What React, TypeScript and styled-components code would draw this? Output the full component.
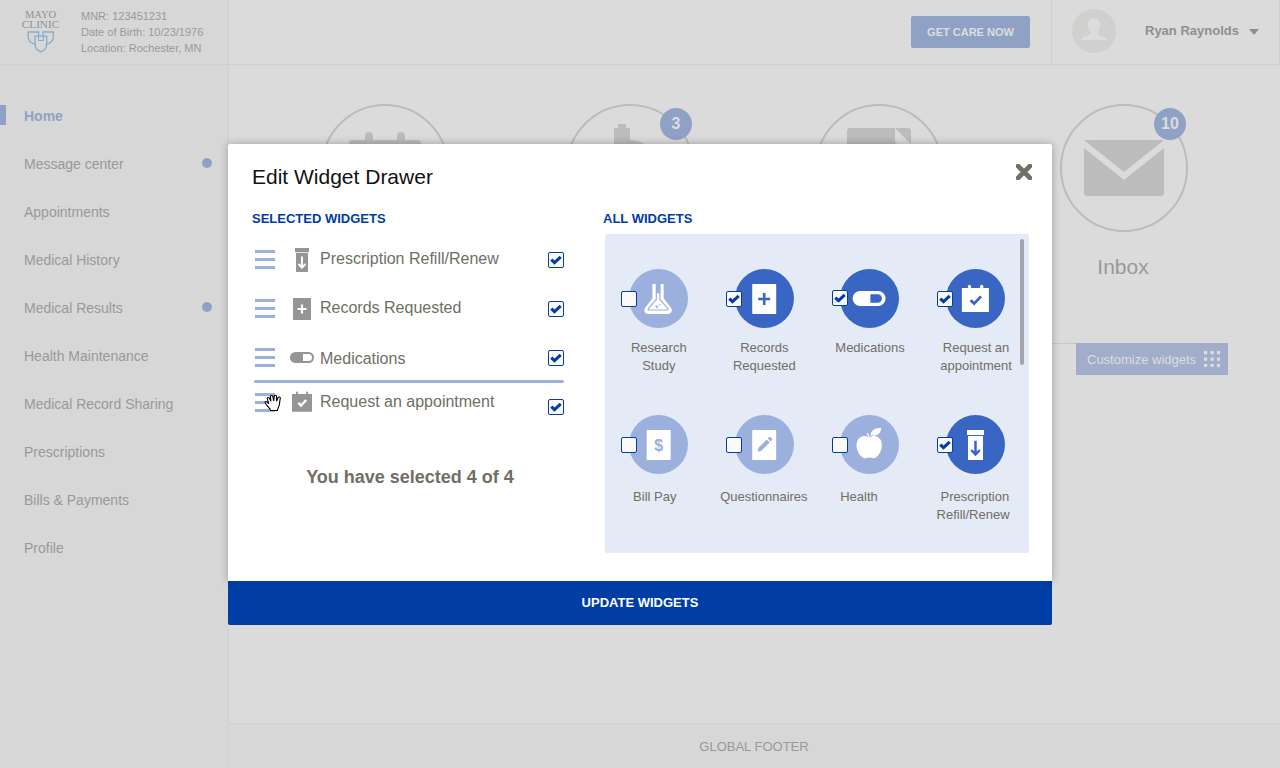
import React from "react";
import styled, { createGlobalStyle, css } from "styled-components";

const color = {
  main: "#dbdbdb",
  side: "#d7d7d7",
  line: "#d0d0d0",
  mutedText: "#999999",
  mutedBlue: "#8fa2c6",
  shape: "#bcbcbc",
  primary: "#003da5",
  strong: "#3a66c3",
  soft: "#9bb0dc",
  text: "#6f6f64",
  icon: "#959595",
  panel: "#e4eaf6",
};

const GlobalStyle = createGlobalStyle`
  *, *::before, *::after { box-sizing: border-box; }
  body {
    margin: 0;
    overflow: hidden;
    font-family: "Liberation Sans", Arial, sans-serif;
    background: ${color.main};
  }
  ul { list-style: none; margin: 0; padding: 0; }
  h1, h2, p { margin: 0; }
  button { font-family: inherit; border: 0; padding: 0; }
  svg { display: block; flex: none; }
`;

/* ---------- page frame ---------- */

const Page = styled.div`
  position: relative;
  display: grid;
  grid-template-columns: 228px 1fr;
  width: 1280px;
  height: 768px;
  overflow: hidden;
`;

const Sidebar = styled.aside`
  background: ${color.side};
  color: ${color.mutedText};
`;

const Identity = styled.div`
  display: flex;
  height: 65px;
  padding: 8px 0 0 21px;
  border-bottom: 1px solid ${color.line};
`;

const Logo = styled.div`
  display: flex;
  flex-direction: column;
  align-items: center;
  width: 39px;
  padding-top: 2px;
  margin-right: 21px;
  font-family: "Liberation Serif", "Times New Roman", serif;
  color: #929292;
`;

const LogoLine = styled.span<{ $size: number }>`
  font-size: ${(p) => p.$size}px;
  line-height: 9.5px;
  white-space: nowrap;
`;

const Patient = styled.p`
  font-size: 11px;
  line-height: 16px;
  white-space: nowrap;
`;

const Nav = styled.ul`
  padding-top: 27px;
`;

const NavItem = styled.li<{ $active?: boolean }>`
  display: flex;
  align-items: center;
  justify-content: space-between;
  height: 48px;
  padding: 0 16px 0 24px;
  font-size: 14px;
  ${(p) =>
    p.$active &&
    css`
      padding-left: 0;
      font-weight: bold;
      color: ${color.mutedBlue};
      justify-content: flex-start;
      gap: 18px;
      &::before {
        content: "";
        width: 6px;
        height: 20px;
        margin-top: -2px;
        background: ${color.mutedBlue};
      }
    `}
`;

const NavDot = styled.span`
  width: 10px;
  height: 10px;
  margin-top: -2px;
  border-radius: 50%;
  background: ${color.mutedBlue};
`;

const Main = styled.main`
  display: flex;
  flex-direction: column;
  background: ${color.main};
  border-left: 1px solid ${color.line};
`;

const TopBar = styled.header`
  display: flex;
  justify-content: flex-end;
  align-items: flex-start;
  height: 65px;
  border-bottom: 1px solid ${color.line};
`;

const CareButton = styled.button`
  width: 119px;
  height: 32px;
  margin: 16px 21px 0 0;
  border-radius: 2px;
  background: ${color.mutedBlue};
  color: #dddddd;
  font-size: 11px;
  font-weight: bold;
`;

const Account = styled.div`
  display: flex;
  width: 229px;
  height: 64px;
  padding: 9px 0 0 20px;
  border: solid ${color.line};
  border-width: 0 1px;
`;

const UserName = styled.span`
  margin: 14px 10px 0 29px;
  font-size: 13px;
  line-height: 15px;
  font-weight: bold;
  color: #8f8f8f;
  white-space: nowrap;
`;

const Caret = styled.svg`
  margin-top: 20px;
`;

const Tiles = styled.div`
  display: grid;
  grid-template-columns: 245px 249px 245px 128px;
  height: 278px;
  padding: 39px 0 0 92px;
`;

const Tile = styled.div`
  display: flex;
  flex-direction: column;
  align-items: center;
  width: 128px;
`;

const Ring = styled.div`
  position: relative;
  width: 128px;
  height: 128px;
  border: 2px solid ${color.shape};
  border-radius: 50%;
`;

const Badge = styled.span`
  position: absolute;
  top: 2px;
  right: 0;
  width: 32px;
  height: 32px;
  border-radius: 50%;
  background: ${color.mutedBlue};
  color: #dcdcdc;
  font-size: 16px;
  font-weight: bold;
  line-height: 32px;
  text-align: center;
`;

const TileLabel = styled.span`
  margin: 22px 2px 0 0;
  font-size: 21px;
  line-height: 26px;
  color: ${color.mutedText};
`;

const CustomizeRow = styled.div`
  display: flex;
  justify-content: flex-end;
  padding-right: 52px;
  &::before {
    content: "";
    flex: 1;
    height: 1px;
    background: #c6c6c6;
  }
`;

const CustomizeButton = styled.button`
  display: flex;
  align-items: center;
  gap: 8px;
  width: 152px;
  height: 32px;
  padding-left: 11px;
  background: #a1adc9;
  color: #dddddd;
  font-size: 13px;
  white-space: nowrap;
`;

const Footer = styled.footer`
  height: 45px;
  margin-top: auto;
  padding-right: 1px;
  border-top: 1px solid ${color.line};
  background: ${color.side};
  color: ${color.mutedText};
  font-size: 13px;
  line-height: 45px;
  text-align: center;
`;

/* ---------- dialog ---------- */

const Dialog = styled.section`
  position: absolute;
  top: 144px;
  left: 228px;
  display: flex;
  flex-direction: column;
  width: 824px;
  height: 481px;
`;

const DialogBody = styled.div`
  display: grid;
  grid-template-columns: 351px 1fr;
  grid-template-rows: 67px 1fr;
  height: 437px;
  padding: 0 20px 0 24px;
  border-radius: 2px 2px 0 0;
  background: #ffffff;
  box-shadow: 0 0 8px rgba(0, 0, 0, 0.28);
`;

const DialogHeader = styled.div`
  grid-column: 1 / -1;
  display: flex;
  justify-content: space-between;
  align-items: flex-start;
  padding-top: 20px;
`;

const Title = styled.h1`
  font-size: 21px;
  line-height: 26px;
  font-weight: normal;
  color: #111111;
`;

const SectionTitle = styled.h2`
  font-size: 13px;
  line-height: 16px;
  font-weight: bold;
  color: ${color.primary};
`;

const SelectedList = styled.ul`
  width: 312px;
  padding-top: 8px;
`;

const SelectedRow = styled.li<{ $height: number }>`
  display: grid;
  grid-template-columns: 20px 24px 1fr 16px;
  column-gap: 6px;
  align-items: start;
  height: ${(p) => p.$height}px;
  padding-left: 3px;
`;

const Handle = styled.span<{ $top: number }>`
  position: relative;
  display: flex;
  flex-direction: column;
  gap: 5px;
  width: 20px;
  margin-top: ${(p) => p.$top}px;
`;

const HandleBar = styled.span`
  height: 3px;
  background: ${color.soft};
`;

const RowIcon = styled.span<{ $top: number }>`
  width: 24px;
  margin: ${(p) => p.$top}px 0 0 9px;
`;

const RowLabel = styled.span<{ $top: number }>`
  margin: ${(p) => p.$top}px 0 0 9px;
  font-size: 16px;
  line-height: 18px;
  color: ${color.text};
  white-space: nowrap;
`;

const DropLine = styled.li`
  height: 3px;
  margin: 0 0 0 2px;
  border-radius: 2px;
  background: ${color.soft};
`;

const Cursor = styled.svg`
  position: absolute;
  top: 1px;
  left: 9px;
`;

const Check = styled.span<{ $top?: number }>`
  display: block;
  width: 16px;
  height: 16px;
  margin-top: ${(p) => p.$top ?? 0}px;
  border: 1px solid ${color.primary};
  border-radius: 2px;
  background: #fafafa;
`;

const Count = styled.p`
  width: 316px;
  margin-top: 37px;
  font-size: 18px;
  line-height: 22px;
  font-weight: bold;
  color: ${color.text};
  text-align: center;
`;

const WidgetPanel = styled.div`
  display: flex;
  align-items: flex-start;
  width: 424px;
  height: 319px;
  margin: 7px 0 0 2px;
  padding: 5px 0 0 1px;
  border-radius: 2px;
  background: ${color.panel};
`;

const WidgetGrid = styled.ul`
  flex: none;
  display: grid;
  grid-template-columns: repeat(4, 105.6px);
  grid-template-rows: 146px 146px;
  width: 414px;
  padding-top: 30px;
`;

const ScrollThumb = styled.div`
  width: 4px;
  height: 126px;
  border-radius: 2px;
  background: #a0a5ae;
`;

const Widget = styled.li`
  display: flex;
  flex-direction: column;
  align-items: center;
`;

const Disc = styled.div<{ $on?: boolean }>`
  position: relative;
  flex: none;
  width: 59px;
  height: 59px;
  border-radius: 50%;
  color: ${(p) => (p.$on ? color.strong : color.soft)};
  background: currentColor;
`;

const DiscCheck = styled.div<{ $top: number }>`
  position: absolute;
  top: ${(p) => p.$top}px;
  left: -8.7px;
`;

const WidgetLabel = styled.span<{ $shift?: number; $top: number }>`
  margin: ${(p) => p.$top}px 0 0 ${(p) => p.$shift ?? 0}px;
  font-size: 13px;
  line-height: 18px;
  color: ${color.text};
  text-align: center;
  white-space: pre;
`;

const UpdateButton = styled.button`
  height: 44px;
  padding-bottom: 2px;
  border-radius: 0 0 2px 2px;
  background: ${color.primary};
  color: #ffffff;
  font-size: 13px;
  font-weight: bold;
`;

/* ---------- drawings ---------- */

const ShieldMark = styled.svg`
  margin-top: 2px;
`;

const Shields = () => (
  <ShieldMark width="28" height="22" viewBox="0 0 28 22" fill="none" stroke="#86adc8" strokeWidth="1.3">
    <path d="M9 13.6C4 12.500 1.300 9.500 1.200 6V1h10.500v4.200" />
    <path d="M18.500 13.600C23.500 12.500 26.200 9.500 26.300 6V1H16v4.200" />
    <path d="M8 5.200h11.700v8c0 3.600-3 6.500-5.900 7.600C10.800 19.700 8 16.800 8 13.200z" />
    <path d="M11.500 5v4.500h4.700V5" strokeWidth="1" />
  </ShieldMark>
);

const Avatar = () => (
  <svg width="44" height="44" viewBox="0 0 44 44">
    <circle cx="22" cy="22" r="22" fill="#d0d0ce" />
    <path
      d="M22 9c-3.700 0-6.200 2.700-6.200 6.800 0 3 1.200 5.800 3 7.200v1.500c-.3 1.200-3 1.900-5.200 2.800C10.800 28.400 9.300 29 9 31h26c-.3-2-1.800-2.600-4.600-3.700-2.200-.9-4.900-1.600-5.200-2.800V23c1.800-1.400 3-4.200 3-7.200C28.200 11.700 25.700 9 22 9z"
      fill="#dcdcdc"
    />
  </svg>
);

const TileArt = ({ children }: { children: React.ReactNode }) => (
  <svg width="124" height="124" viewBox="2 2 124 124" fill={color.shape}>
    {children}
  </svg>
);

const Tick = () => (
  <svg width="14" height="14" viewBox="0 0 14 14">
    <path d="M2.300 6.600l3.200 3.100 6.200-5.900" fill="none" stroke={color.primary} strokeWidth="3" />
  </svg>
);

const CheckBox = ({ on, top }: { on?: boolean; top?: number }) => (
  <Check $top={top} role="checkbox" aria-checked={!!on}>
    {on && <Tick />}
  </Check>
);

const GrabHand = () => (
  <Cursor width="19" height="18" viewBox="0 0 17 18" preserveAspectRatio="none">
    <path
      d="M5.800 16.500C5.500 14.500 3.500 12.800 2.600 11.200 1.800 9.800.5 8.700 1 7.900c.7-.9 2 .1 3.200 1.700L2.900 4.700C2.600 3.400 4.300 2.900 4.800 4.100L6.200 7.300 5.700 2.600c-.1-1.500 1.900-1.600 2.200-.2L8.700 7l.5-4.800C9.400.8 11.300 1 11.300 2.400L11.200 7.200l1.400-3.600c.5-1.200 2.200-.7 2 .6-.5 2.600-.6 4.500-.9 6.600-.3 2.200-1.500 3.300-1.700 5.700z"
      fill="#fff"
      stroke="#000"
      strokeWidth="1"
    />
  </Cursor>
);

const SmallBottle = () => (
  <>
    <path d="M5 0h14v4.200H5zM6 5h12v19H6z" fill={color.icon} />
    <path d="M12 8.500v11M8.500 16l3.500 3.600 3.500-3.600" fill="none" stroke="#fff" strokeWidth="1.900" />
  </>
);

const SmallRecord = () => (
  <>
    <rect x="3" y="1" width="18" height="22" rx=".6" fill={color.icon} />
    <path d="M12 7.500v9M7.500 12h9" stroke="#fff" strokeWidth="2.200" />
  </>
);

const SmallPill = () => (
  <>
    <rect y="6" width="24" height="11" rx="5.500" fill={color.icon} />
    <path d="M13 8h5.500a3.500 3.500 0 010 7H13z" fill="#fff" />
  </>
);

const SmallCalendar = () => (
  <>
    <path d="M2 4h3.900V2.600a1 1 0 012 0V4h8.200V2.600a1 1 0 012 0V4H22v17.700H2z" fill={color.icon} />
    <path d="M8.300 12.800l2.700 2.800 5.300-5.600" fill="none" stroke="#fff" strokeWidth="2.300" />
  </>
);

const DiscArt = ({ children }: { children: React.ReactNode }) => (
  <svg width="59" height="59" viewBox="0 0 59 59" fill="#fff">
    {children}
  </svg>
);

const Flask = () => (
  <DiscArt>
    <path d="M23.400 15h11.300v14.300l7.200 9.400c2.300 3.200 0 6.300-3.200 6.300H19.500c-3.200 0-5.500-3.100-3.200-6.300l7.100-9.400z" />
    <path d="M26.700 15h4.900v9.300h-4.900z" fill="currentColor" />
    <path
      d="M27.300 24v6.500l-8 9.200c-.5.700 0 1.300.7 1.300h18.200c.7 0 1.200-.6.7-1.300l-8-9.200V24"
      fill="none"
      stroke="currentColor"
      strokeWidth="1.200"
    />
    <circle cx="27.800" cy="37.700" r="1.300" fill="currentColor" />
    <circle cx="30.700" cy="35.700" r=".8" fill="currentColor" />
  </DiscArt>
);

const RecordSheet = () => (
  <DiscArt>
    <rect x="17.200" y="15" width="24" height="30" rx=".8" />
    <path d="M29.200 24v12M23.200 30h12" stroke="currentColor" strokeWidth="2.600" />
  </DiscArt>
);

const Pill = () => (
  <DiscArt>
    <rect x="12.600" y="22" width="33" height="15" rx="7.500" />
    <path d="M30.400 25.300h7.300a4.200 4.200 0 010 8.400h-7.300z" fill="currentColor" />
  </DiscArt>
);

const Calendar = () => (
  <DiscArt>
    <path d="M15.900 19h6V17.300a1.600 1.600 0 013.200 0V19h9V17.300a1.600 1.600 0 013.200 0V19h5.600v24h-27z" />
    <path d="M24.600 31.200l3.600 3.400 6.800-7.200" fill="none" stroke="currentColor" strokeWidth="2.800" />
  </DiscArt>
);

const Bill = () => (
  <DiscArt>
    <rect x="17.700" y="15" width="24" height="30" rx=".8" />
    <text x="29.700" y="35.500" fontSize="16" fontWeight="bold" fill="currentColor" textAnchor="middle">
      $
    </text>
  </DiscArt>
);

const Questionnaire = () => (
  <DiscArt>
    <rect x="17.200" y="15" width="24" height="30" rx=".8" />
    <path
      d="M22.500 36.700l1-3.900 8.300-8.200 2.900 2.900-8.300 8.200zM32.800 23.600l1.300-1.300c.5-.5 1-.5 1.500 0l1.300 1.300c.5.5.5 1 0 1.500L35.700 26.500z"
      fill="currentColor"
    />
  </DiscArt>
);

const Apple = () => (
  <DiscArt>
    <path d="M28.500 22.500c-.2-1.500-1-2.800-2.200-3.700l1.200-.7c1.200 1.200 1.900 2.500 2.200 4.300 2.200-1.600 5.600-1.900 8.300-.2 3.300 2 4.400 6 3.700 10.200-.8 4.600-3.400 8.600-6.200 10.300-1.900 1.100-3.300.5-4.600.1-1.100-.3-2.100-.3-3.200 0-1.500.4-2.800 1-4.600-.1-2.900-1.700-5.600-5.700-6.400-10.300-.7-4.200.5-8.200 3.700-10.200 2.600-1.600 5.900-1.400 8.100.3z" />
    <path d="M30.500 21c0-5 3.800-8.300 10.800-8-.6 5.800-4.300 8.500-9.500 7.300l5-4.400z" />
  </DiscArt>
);

const Bottle = () => (
  <DiscArt>
    <path d="M21 15h17v5H21zM22 21h15v24H22z" />
    <path d="M29.500 25.700v13.500M25.200 35l4.300 4.500 4.300-4.500" fill="none" stroke="currentColor" strokeWidth="2.500" />
  </DiscArt>
);

/* ---------- data ---------- */

const navItems = [
  { label: "Home", active: true },
  { label: "Message center", dot: true },
  { label: "Appointments" },
  { label: "Medical History" },
  { label: "Medical Results", dot: true },
  { label: "Health Maintenance" },
  { label: "Medical Record Sharing" },
  { label: "Prescriptions" },
  { label: "Bills & Payments" },
  { label: "Profile" },
];

const selected = [
  { label: "Prescription Refill/Renew", art: <SmallBottle />, height: 49, handle: 15, icon: 13, text: 15, check: 17 },
  { label: "Records Requested", art: <SmallRecord />, height: 49, handle: 15, icon: 13, text: 15, check: 17 },
  { label: "Medications", art: <SmallPill />, height: 47, handle: 15, icon: 13, text: 17, check: 17 },
  { label: "Request an appointment", art: <SmallCalendar />, height: 46, handle: 10, icon: 7, text: 10, check: 16, dragging: true },
];

const widgets = [
  { label: "Research\nStudy", art: <Flask />, check: 22, top: 11 },
  { label: "Records\nRequested", art: <RecordSheet />, on: true, check: 22, top: 11 },
  { label: "Medications", art: <Pill />, on: true, check: 21, top: 11 },
  { label: "Request an\nappointment", art: <Calendar />, on: true, check: 22, top: 11, shift: 1 },
  { label: "Bill Pay", art: <Bill />, check: 22, top: 14, shift: -8 },
  { label: "Questionnaires", art: <Questionnaire />, check: 22, top: 14, shift: -1 },
  { label: "Health", art: <Apple />, check: 22, top: 14, shift: -22 },
  { label: " Prescription\nRefill/Renew", art: <Bottle />, on: true, check: 22, top: 14, shift: -5 },
];

const gridDots = [0, 1, 2].flatMap((r) => [0, 1, 2].map((c) => ({ x: c * 6.5, y: r * 6.5 })));

export default function App() {
  return (
    <>
      <GlobalStyle />
      <Page>
        <Sidebar>
          <Identity>
            <Logo>
              <LogoLine $size={10.5}>MAYO</LogoLine>
              <LogoLine $size={11.2}>CLINIC</LogoLine>
              <Shields />
            </Logo>
            <Patient>
              MNR: 123451231
              <br />
              Date of Birth: 10/23/1976
              <br />
              Location: Rochester, MN
            </Patient>
          </Identity>
          <Nav>
            {navItems.map((item) => (
              <NavItem key={item.label} $active={item.active}>
                {item.label}
                {item.dot && <NavDot />}
              </NavItem>
            ))}
          </Nav>
        </Sidebar>

        <Main>
          <TopBar>
            <CareButton>GET CARE NOW</CareButton>
            <Account>
              <Avatar />
              <UserName>Ryan Raynolds</UserName>
              <Caret width="10" height="6" viewBox="0 0 10 6">
                <path d="M0 0h10L5 6z" fill="#8f8f8f" />
              </Caret>
            </Account>
          </TopBar>

          <Tiles>
            <Tile>
              <Ring>
                <TileArt>
                  <path d="M28 39a3 3 0 013-3h13v-4a4 4 0 018 0v4h24v-4a4 4 0 018 0v4h13a3 3 0 013 3v54H28z" />
                </TileArt>
              </Ring>
            </Tile>
            <Tile>
              <Ring>
                <TileArt>
                  <path d="M52 20h8v4h4v12c14 0 22 8 22 20v30H48V24h4z" />
                </TileArt>
                <Badge>3</Badge>
              </Ring>
            </Tile>
            <Tile>
              <Ring>
                <TileArt>
                  <path d="M35 24h45v13a3 3 0 003 3h13v60H32V27a3 3 0 013-3zM80 24h13a3 3 0 013 3v13z" />
                </TileArt>
              </Ring>
            </Tile>
            <Tile>
              <Ring>
                <TileArt>
                  <path d="M24 36h80L64 68zM24 44l40 32 40-32v45a3 3 0 01-3 3H27a3 3 0 01-3-3z" />
                </TileArt>
                <Badge>10</Badge>
              </Ring>
              <TileLabel>Inbox</TileLabel>
            </Tile>
          </Tiles>

          <CustomizeRow>
            <CustomizeButton>
              Customize widgets
              <svg width="16" height="16" viewBox="0 0 16 16">
                {gridDots.map((d) => (
                  <rect key={`${d.x}-${d.y}`} x={d.x} y={d.y} width="3.200" height="3.200" fill="#dedede" />
                ))}
              </svg>
            </CustomizeButton>
          </CustomizeRow>

          <Footer>GLOBAL FOOTER</Footer>
        </Main>

        <Dialog role="dialog" aria-modal="true">
          <DialogBody>
            <DialogHeader>
              <Title>Edit Widget Drawer</Title>
              <svg width="16" height="16" viewBox="0 0 16 16">
                <path
                  d="M2 2l12 12M14 2L2 14"
                  stroke="#706f61"
                  strokeWidth="4.600"
                  strokeLinecap="round"
                />
              </svg>
            </DialogHeader>

            <div>
              <SectionTitle>SELECTED WIDGETS</SectionTitle>
              <SelectedList>
                {selected.map((row) => (
                  <React.Fragment key={row.label}>
                    {row.dragging && <DropLine />}
                    <SelectedRow $height={row.height}>
                      <Handle $top={row.handle}>
                        <HandleBar />
                        <HandleBar />
                        <HandleBar />
                        {row.dragging && <GrabHand />}
                      </Handle>
                      <RowIcon $top={row.icon}>
                        <svg width="24" height="24" viewBox="0 0 24 24">
                          {row.art}
                        </svg>
                      </RowIcon>
                      <RowLabel $top={row.text}>{row.label}</RowLabel>
                      <CheckBox on top={row.check} />
                    </SelectedRow>
                  </React.Fragment>
                ))}
              </SelectedList>
              <Count>You have selected 4 of 4</Count>
            </div>

            <div>
              <SectionTitle>ALL WIDGETS</SectionTitle>
              <WidgetPanel>
                <WidgetGrid>
                  {widgets.map((w) => (
                    <Widget key={w.label}>
                      <Disc $on={w.on}>
                        {w.art}
                        <DiscCheck $top={w.check}>
                          <CheckBox on={w.on} />
                        </DiscCheck>
                      </Disc>
                      <WidgetLabel $top={w.top} $shift={w.shift}>
                        {w.label}
                      </WidgetLabel>
                    </Widget>
                  ))}
                </WidgetGrid>
                <ScrollThumb />
              </WidgetPanel>
            </div>
          </DialogBody>
          <UpdateButton>UPDATE WIDGETS</UpdateButton>
        </Dialog>
      </Page>
    </>
  );
}
